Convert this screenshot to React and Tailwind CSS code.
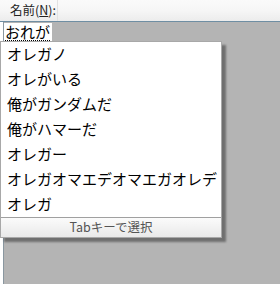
const items = [
  'オレガノ',
  'オレがいる',
  '俺がガンダムだ',
  '俺がハマーだ',
  'オレガー',
  'オレガオマエデオマエガオレデ',
  'オレガ',
]

const jp = { fontFamily: '"Noto Sans CJK JP", "Noto Sans", sans-serif' }

export default function App() {
  return (
    <div className="w-[280px] h-[284px] overflow-hidden flex flex-col bg-[#b4b4b4]" style={jp}>
      <div className="h-[22px] shrink-0 flex bg-gradient-to-b from-[#fafafa] via-[#f6f6f6] to-[#ececec] border-b border-[#6f8ea3]">
        <div className="w-[58px] flex items-center pl-[10px] text-[12.5px] text-[#222] leading-none border-r border-[#e2e2e2]">
          名前(<span className="underline">N</span>):
        </div>
      </div>

      <div className="flex-1 flex relative">
        <div className="w-[3px] bg-white shrink-0" />
        <div className="w-px bg-[#8a97a0] shrink-0" />
        <div className="flex-1 bg-[#b4b4b4]">
          <div className="w-[48px] h-[18px] mt-px bg-white flex items-center pl-px">
            <span className="text-[15px] leading-none text-black border-b border-dotted border-black pb-[1px]">おれが</span>
          </div>
        </div>

        <div className="absolute left-0 top-[19px] w-[222px] bg-white border border-[#a8a8a8] shadow-[4px_4px_2px_rgba(0,0,0,0.38)] flex flex-col">
          {items.map((t) => (
            <div key={t} className="h-[25px] flex items-center pl-[6px] pb-[2px] text-[15px] text-black whitespace-nowrap leading-none">
              {t}
            </div>
          ))}
          <div className="h-[20px] border-t border-[#a0a0a0] bg-gradient-to-b from-[#fbfbfb] to-[#e9e9e9] flex items-center justify-center text-[12.5px] text-[#555] leading-none">
            Tabキーで選択
          </div>
        </div>
      </div>
    </div>
  )
}
